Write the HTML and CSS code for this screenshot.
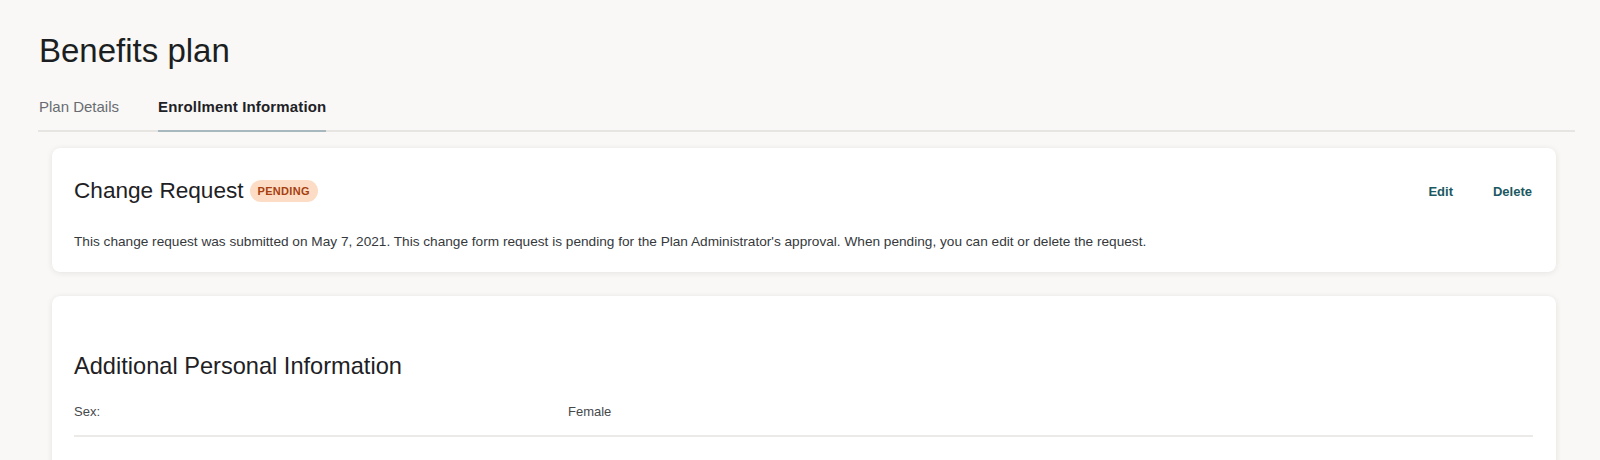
FILE: index.html
```html
<!DOCTYPE html>
<html lang="en">
<head>
<meta charset="utf-8">
<title>Benefits plan</title>
<link rel="stylesheet" href="styles.css">
</head>
<body>
<div class="page">
  <h1 class="page-title">Benefits plan</h1>
  <nav class="tabs">
    <a class="tab">Plan Details</a>
    <a class="tab tab-active">Enrollment Information</a>
  </nav>
  <div class="cards">
    <section class="card card-request">
      <div class="card-head">
        <div class="card-title-group">
          <h2 class="card-title">Change Request</h2>
          <span class="badge">PENDING</span>
        </div>
        <div class="actions">
          <a class="action">Edit</a>
          <a class="action">Delete</a>
        </div>
      </div>
      <p class="card-text">This change request was submitted on May 7, 2021. This change form request is pending for the Plan Administrator's approval. When pending, you can edit or delete the request.</p>
    </section>
    <section class="card card-info">
      <h2 class="card-title card-title-lg">Additional Personal Information</h2>
      <div class="info-row">
        <span class="info-label">Sex:</span>
        <span class="info-value">Female</span>
      </div>
    </section>
  </div>
</div>
</body>
</html>
```

FILE: styles.css
```css
html, body {
  margin: 0;
  padding: 0;
  background: #f9f8f6;
  height: 100%;
  overflow: hidden;
}
body {
  font-family: "Liberation Sans", Arial, sans-serif;
  color: #1e2124;
}
.page {
  padding: 31px 25px 0 38px;
}
.page-title {
  margin: 0 0 0 1px;
  font-size: 33px;
  line-height: 40px;
  font-weight: 400;
  color: #1c1f22;
}
.tabs {
  display: flex;
  gap: 39px;
  margin-top: 26px;
  border-bottom: 2px solid #e7e5e2;
  padding-left: 1px;
}
.tab {
  font-size: 15px;
  line-height: 20px;
  padding-bottom: 13px;
  margin-bottom: -2px;
  color: #686c72;
  border-bottom: 2px solid transparent;
}
.tab-active {
  color: #1e2226;
  font-weight: 700;
  letter-spacing: 0.15px;
  border-bottom-color: #a7b9be;
}
.cards {
  margin: 16px 19px 0 14px;
  display: flex;
  flex-direction: column;
  gap: 24px;
}
.card {
  background: #ffffff;
  border-radius: 8px;
  box-shadow: 0 1px 6px rgba(40, 30, 20, 0.09), 0 0 1px rgba(40, 30, 20, 0.05);
}
.card-request {
  padding: 29px 24px 21px 22px;
}
.card-head {
  display: flex;
  align-items: center;
  justify-content: space-between;
}
.card-title-group {
  display: flex;
  align-items: center;
  gap: 6px;
}
.card-title {
  margin: 0;
  font-size: 22.6px;
  line-height: 28px;
  font-weight: 400;
  color: #1e2124;
}
.card-title-lg {
  font-size: 23.6px;
}
.badge {
  display: inline-flex;
  align-items: center;
  height: 22px;
  padding: 0 8px;
  border-radius: 11px;
  background: #fddcc5;
  color: #a6400f;
  font-size: 11px;
  font-weight: 700;
  letter-spacing: 0.3px;
}
.actions {
  display: flex;
  gap: 40px;
}
.action {
  font-size: 13px;
  font-weight: 700;
  color: #1b5962;
}
.card-text {
  margin: 28px 0 0;
  font-size: 13.65px;
  line-height: 18px;
  color: #36393c;
}
.card-info {
  padding: 56px 23px 40px 22px;
}
.info-row {
  margin-top: 23px;
  display: grid;
  grid-template-columns: 494px 1fr;
  padding-bottom: 14px;
  border-bottom: 2px solid #ebeae8;
  font-size: 13px;
  line-height: 18px;
  color: #46494c;
}
```
